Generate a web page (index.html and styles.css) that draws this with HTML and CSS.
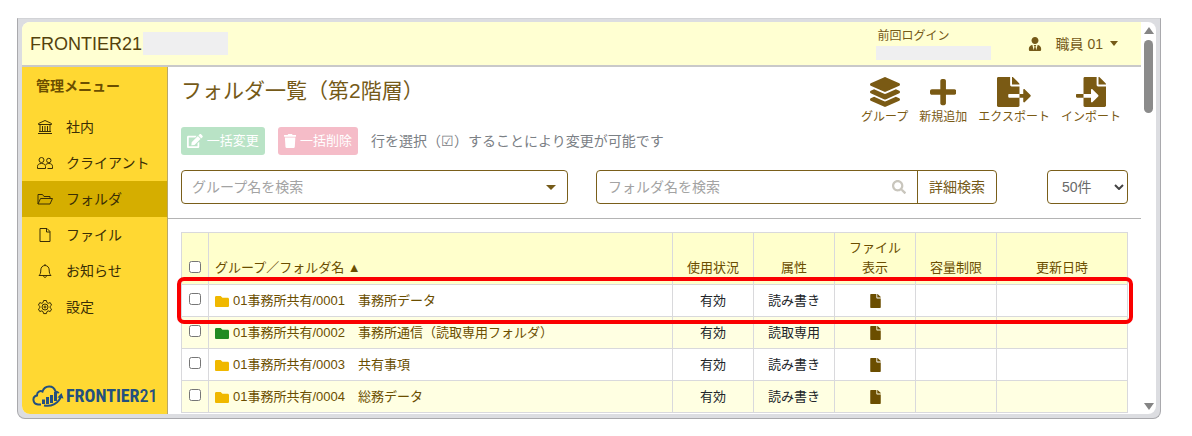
FILE: index.html
```html
<!DOCTYPE html>
<html lang="ja">
<head>
    <meta charset="UTF-8">
    <meta name="viewport" content="width=device-width, initial-scale=1.0">
    <title>FRONTIER21</title>
    <link rel="stylesheet" href="styles.css">
</head>
<body>
    <svg class="sprite" aria-hidden="true">
        <symbol id="i-folder" viewBox="0 64 512 384" preserveAspectRatio="none"><path d="M464 128H272l-64-64H48C21.49 64 0 85.49 0 112v288c0 26.51 21.49 48 48 48h416c26.51 0 48-21.49 48-48V176c0-26.51-21.49-48-48-48z"/></symbol>
        <symbol id="i-file" viewBox="0 0 384 512"><path d="M224 136V0H24C10.7 0 0 10.7 0 24v464c0 13.3 10.7 24 24 24h336c13.3 0 24-10.7 24-24V160H248c-13.2 0-24-10.8-24-24zm160-14.1v6.1H256V0h6.1c6.4 0 12.5 2.5 17 7l97.9 98c4.5 4.5 7 10.6 7 16.9z"/></symbol>
    </svg>

    <div class="window">
        <div class="app">
            <header class="topbar">
                <div class="brand">FRONTIER21 <span class="mask mask-brand"></span></div>
                <div class="account">
                    <div class="last-login">
                        <span>前回ログイン</span>
                        <span class="mask mask-login"></span>
                    </div>
                    <button type="button" class="user-menu">
                        <svg class="user-icon" viewBox="0 0 448 512"><path d="M224 256c70.7 0 128-57.3 128-128S294.7 0 224 0 96 57.3 96 128s57.3 128 128 128zm95.8 32.6L272 480l-32-136 32-56h-96l32 56-32 136-47.8-191.4C56.9 292 0 350.3 0 422.4V464c0 26.5 21.5 48 48 48h352c26.5 0 48-21.5 48-48v-41.6c0-72.1-56.9-130.4-128.2-133.8z"/></svg>
                        <span>職員 01</span>
                        <span class="caret"></span>
                    </button>
                </div>
            </header>

            <div class="body">
                <nav class="sidebar">
                    <h2>管理メニュー</h2>
                    <a href="#">
                        <svg viewBox="0 0 16 16"><path d="M1.5 4.5 8 1.5l6.500 3v1h-13zM3 5.500v7M5.500 7v5.500M8 7v5.500M10.500 7v5.500M13 5.500v7M2 12.500h12M1 14.500h14"/></svg>
                        <span>社内</span>
                    </a>
                    <a href="#">
                        <svg viewBox="0 0 16 16"><circle cx="4.500" cy="5" r="2.500"/><circle cx="11.800" cy="5.500" r="2.200"/><path d="M.500 13.500v-2c0-2 1.500-3 4-3s4 1 4 3v2zM8.500 10c.7-1 1.800-1.500 3.300-1.500 2.400 0 3.700 1 3.700 2.800v2.200h-5"/></svg>
                        <span>クライアント</span>
                    </a>
                    <a href="#" class="active">
                        <svg viewBox="0 0 16 16"><path d="M1 13V3.500h4.500l1.500 2h6V7.500M1 13l2.500-5.500h12L13 13z"/></svg>
                        <span>フォルダ</span>
                    </a>
                    <a href="#">
                        <svg viewBox="0 0 16 16"><path d="M3 1.500h7l3 3v10H3zM9.500 1.500v3.500H13"/></svg>
                        <span>ファイル</span>
                    </a>
                    <a href="#">
                        <svg viewBox="0 0 16 16"><path d="M2 12.500c1.200-1.200 1.800-2.500 1.800-5.500 0-2.500 1.700-4.500 4.200-4.500s4.200 2 4.200 4.500c0 3 .6 4.300 1.800 5.500zM8 1v1.500M6.500 12.500c0 2.500 3 2.500 3 0"/></svg>
                        <span>お知らせ</span>
                    </a>
                    <a href="#">
                        <svg viewBox="0 0 16 16"><path d="m6.600 1.500h2.800l.5 2 1.300.8 2-.7 1.400 2.500-1.500 1.300v1.400l1.500 1.300-1.400 2.400-2-.6-1.300.8-.5 1.900H6.600l-.5-1.900-1.300-.8-2 .6-1.400-2.400 1.500-1.300V7.400L1.400 6.100l1.400-2.500 2 .7 1.300-.8z"/><circle cx="8" cy="8" r="3"/><circle cx="8" cy="8" r="1"/></svg>
                        <span>設定</span>
                    </a>
                    <div class="logo">
                        <svg viewBox="0 0 32 24"><path class="logo-line" d="M9 20.500H6C.5 20-.2 12.500 5 11.500c-.2-4 3.500-5 5.500-4C12.500 1 21.500.5 23.500 7.500c1.500.2 2.500.8 3.300 1.700M12 21.500c7 1.500 15-2 17-9.500"/><path class="logo-fill" d="M10 15.500h3v4.500h-3zM14 13h3v7h-3zM18 11h3v8h-3zM22 8h3v9h-3zM25.500 13.500 29.500 9l2 5.500z"/></svg>
                        <span>FRONTIER<b>21</b></span>
                    </div>
                </nav>

                <main class="content">
                    <section class="controls">
                        <div class="heading">
                            <div>
                                <h1>フォルダ一覧（第2階層）</h1>
                                <div class="bulk">
                                    <button type="button" class="bulk-btn edit">
                                        <svg viewBox="0 0 576 512"><path d="M402.600 83.200l90.200 90.200c3.800 3.800 3.800 10 0 13.800L274.400 405.600l-92.800 10.300c-12.400 1.400-22.900-9.100-21.500-21.500l10.300-92.800L388.800 83.200c3.800-3.800 10-3.800 13.800 0zm162-22.900l-48.800-48.800c-15.200-15.200-39.900-15.200-55.200 0l-35.400 35.400c-3.800 3.800-3.800 10 0 13.800l90.200 90.200c3.800 3.800 10 3.800 13.800 0l35.400-35.400c15.200-15.300 15.200-40 0-55.200zM384 346.200V448H64V128h229.800c3.200 0 6.200-1.300 8.500-3.500l40-40c7.600-7.600 2.200-20.500-8.500-20.500H48C21.500 64 0 85.500 0 112v352c0 26.500 21.500 48 48 48h352c26.500 0 48-21.500 48-48V306.200c0-10.700-12.900-16-20.500-8.500l-40 40c-2.200 2.300-3.500 5.300-3.500 8.500z"/></svg>
                                        一括変更
                                    </button>
                                    <button type="button" class="bulk-btn delete">
                                        <svg viewBox="0 0 448 512"><path d="M432 32H312l-9.400-18.700A24 24 0 0 0 281.100 0H166.800a23.720 23.720 0 0 0-21.400 13.300L136 32H16A16 16 0 0 0 0 48v32a16 16 0 0 0 16 16h416a16 16 0 0 0 16-16V48a16 16 0 0 0-16-16zM53.200 467a48 48 0 0 0 47.900 45h245.800a48 48 0 0 0 47.900-45L416 128H32z"/></svg>
                                        一括削除
                                    </button>
                                    <span class="hint">行を選択（☑）することにより変更が可能です</span>
                                </div>
                            </div>
                            <div class="actions">
                                <button type="button">
                                    <svg viewBox="0 0 512 512"><path d="M12.410 148.020l232.940 105.670c6.800 3.090 14.490 3.090 21.290 0l232.940-105.670c16.550-7.510 16.550-32.520 0-40.030L266.650 2.310a25.607 25.607 0 0 0-21.290 0L12.410 107.980c-16.550 7.510-16.550 32.530 0 40.040zm487.180 88.280l-58.090-26.330-161.640 73.270c-7.560 3.430-15.590 5.170-23.860 5.170s-16.290-1.740-23.860-5.170L70.510 209.970l-58.100 26.330c-16.550 7.500-16.550 32.500 0 40l232.940 105.590c6.800 3.080 14.490 3.080 21.290 0L499.590 276.300c16.550-7.500 16.550-32.500 0-40zm0 127.800l-57.870-26.230-161.860 73.370c-7.560 3.430-15.590 5.170-23.860 5.170s-16.290-1.740-23.860-5.170L70.290 337.870 12.410 364.100c-16.550 7.500-16.550 32.500 0 40l232.940 105.590c6.800 3.080 14.490 3.080 21.290 0L499.590 404.100c16.550-7.500 16.550-32.500 0-40z"/></svg>
                                    <span>グループ</span>
                                </button>
                                <button type="button">
                                    <svg viewBox="0 0 448 512"><path d="M416 208H272V64c0-17.670-14.330-32-32-32h-32c-17.670 0-32 14.330-32 32v144H32c-17.670 0-32 14.330-32 32v32c0 17.670 14.330 32 32 32h144v144c0 17.670 14.330 32 32 32h32c17.670 0 32-14.330 32-32V304h144c17.670 0 32-14.330 32-32v-32c0-17.670-14.330-32-32-32z"/></svg>
                                    <span>新規追加</span>
                                </button>
                                <button type="button">
                                    <svg viewBox="0 0 576 512"><path d="M384 121.900c0-6.300-2.500-12.400-7-16.900L279.100 7c-4.500-4.500-10.600-7-17-7H256v128h128zM571 308l-95.700-96.400c-10.100-10.100-27.400-3-27.400 11.300V288h-64v64h64v65.200c0 14.300 17.300 21.400 27.400 11.300L571 332c6.600-6.600 6.600-17.400 0-24zm-379 28v-32c0-8.800 7.200-16 16-16h176V160H248c-13.200 0-24-10.800-24-24V0H24C10.700 0 0 10.700 0 24v464c0 13.300 10.700 24 24 24h336c13.300 0 24-10.700 24-24V352H208c-8.800 0-16-7.200-16-16z"/></svg>
                                    <span>エクスポート</span>
                                </button>
                                <button type="button">
                                    <svg viewBox="0 0 512 512"><path d="M16 288c-8.800 0-16 7.200-16 16v32c0 8.800 7.200 16 16 16h112v-64zm489-183L407.100 7c-4.500-4.500-10.600-7-17-7H384v128h128v-6.100c0-6.300-2.500-12.400-7-16.900zm-153 31V0H152c-13.300 0-24 10.700-24 24v264h128v-65.200c0-14.300 17.300-21.400 27.400-11.300L379 308c6.600 6.700 6.600 17.400 0 24l-95.700 96.400c-10.100 10.100-27.400 3-27.400-11.300V352H128v136c0 13.300 10.700 24 24 24h336c13.300 0 24-10.700 24-24V160H376c-13.200 0-24-10.800-24-24z"/></svg>
                                    <span>インポート</span>
                                </button>
                            </div>
                        </div>

                        <form class="search">
                            <div class="field group-field">
                                <select class="group-select" aria-label="グループ名を検索">
                                    <option>グループ名を検索</option>
                                </select>
                                <span class="caret"></span>
                            </div>
                            <div class="field folder-field">
                                <input type="text" placeholder="フォルダ名を検索" aria-label="フォルダ名を検索">
                                <svg class="search-icon" viewBox="0 0 512 512"><path d="M505 442.700L405.300 343c-4.500-4.500-10.600-7-17-7H372c27.600-35.300 44-79.700 44-128C416 93.100 322.900 0 208 0S0 93.100 0 208s93.100 208 208 208c48.300 0 92.700-16.400 128-44v16.300c0 6.400 2.500 12.500 7 17l99.700 99.700c9.400 9.400 24.600 9.400 33.900 0l28.300-28.300c9.400-9.400 9.400-24.600.1-34zM208 336c-70.700 0-128-57.200-128-128 0-70.700 57.200-128 128-128 70.700 0 128 57.200 128 128 0 70.700-57.200 128-128 128z"/></svg>
                                <button type="button" class="detail-btn">詳細検索</button>
                            </div>
                            <div class="field count-field">
                                <select aria-label="表示件数">
                                    <option>50件</option>
                                </select>
                                <svg class="chevron" viewBox="0 0 10 6"><path d="M1 1l4 4 4-4"/></svg>
                            </div>
                        </form>
                    </section>

                    <div class="list">
                        <table>
                            <colgroup>
                                <col class="col-check">
                                <col>
                                <col class="col-info">
                                <col class="col-info">
                                <col class="col-info">
                                <col class="col-info">
                                <col class="col-date">
                            </colgroup>
                            <thead>
                                <tr>
                                    <th><input type="checkbox" aria-label="すべて選択"></th>
                                    <th class="name">グループ／フォルダ名 ▲</th>
                                    <th>使用状況</th>
                                    <th>属性</th>
                                    <th>ファイル<br>表示</th>
                                    <th>容量制限</th>
                                    <th>更新日時</th>
                                </tr>
                            </thead>
                            <tbody>
                                <tr class="marked">
                                    <td><input type="checkbox" aria-label="0001を選択"><span class="marker"></span></td>
                                    <td class="name"><a href="#"><svg class="folder"><use href="#i-folder"/></svg>01事務所共有/0001　事務所データ</a></td>
                                    <td>有効</td>
                                    <td>読み書き</td>
                                    <td><svg class="file"><use href="#i-file"/></svg></td>
                                    <td></td>
                                    <td></td>
                                </tr>
                                <tr>
                                    <td><input type="checkbox" aria-label="0002を選択"></td>
                                    <td class="name"><a href="#"><svg class="folder readonly"><use href="#i-folder"/></svg>01事務所共有/0002　事務所通信（読取専用フォルダ）</a></td>
                                    <td>有効</td>
                                    <td>読取専用</td>
                                    <td><svg class="file"><use href="#i-file"/></svg></td>
                                    <td></td>
                                    <td></td>
                                </tr>
                                <tr>
                                    <td><input type="checkbox" aria-label="0003を選択"></td>
                                    <td class="name"><a href="#"><svg class="folder"><use href="#i-folder"/></svg>01事務所共有/0003　共有事項</a></td>
                                    <td>有効</td>
                                    <td>読み書き</td>
                                    <td><svg class="file"><use href="#i-file"/></svg></td>
                                    <td></td>
                                    <td></td>
                                </tr>
                                <tr>
                                    <td><input type="checkbox" aria-label="0004を選択"></td>
                                    <td class="name"><a href="#"><svg class="folder"><use href="#i-folder"/></svg>01事務所共有/0004　総務データ</a></td>
                                    <td>有効</td>
                                    <td>読み書き</td>
                                    <td><svg class="file"><use href="#i-file"/></svg></td>
                                    <td></td>
                                    <td></td>
                                </tr>
                            </tbody>
                        </table>
                    </div>
                </main>
            </div>
        </div>

        <div class="scrollbar" aria-hidden="true">
            <span class="arrow up"></span>
            <span class="thumb"></span>
            <span class="arrow down"></span>
        </div>
    </div>
</body>
</html>
```
FILE: styles.css
```css
* {
    margin: 0;
    padding: 0;
    box-sizing: border-box;
}

body {
    font-family: "Liberation Sans", "Noto Sans CJK JP", sans-serif;
    font-size: 14px;
    line-height: 20px;
    color: #755a18;
    background: #fff;
    height: 100vh;
    padding: 18px 31px 17px 17px;
}

button,
input,
select {
    font: inherit;
    color: inherit;
}

button {
    background: none;
    border: none;
    cursor: pointer;
}

a {
    color: inherit;
    text-decoration: none;
}

svg {
    fill: currentColor;
    flex-shrink: 0;
}

.sprite {
    position: absolute;
    width: 0;
    height: 0;
}

/* window frame */
.window {
    display: flex;
    height: 100%;
    border: 1px solid #a9a9ad;
    border-top-color: #d2d3d6;
    border-radius: 0 0 8px 8px;
    background: #dcdde1;
    padding: 3px 4px 4px;
}

.app {
    flex: 1;
    min-width: 0;
    display: flex;
    flex-direction: column;
    overflow: hidden;
    border-radius: 8px 0 0 8px;
    background: #fff;
}

.scrollbar {
    width: 15px;
    display: flex;
    flex-direction: column;
    align-items: center;
    padding: 5px 0 4px;
    background: #fff;
    border-radius: 0 8px 8px 0;
}

.arrow {
    border: 5px solid transparent;
}

.arrow.up {
    border-top: none;
    border-bottom: 7px solid #858585;
}

.arrow.down {
    border-bottom: none;
    border-top: 7px solid #858585;
    margin-top: auto;
}

.thumb {
    width: 9px;
    height: 73px;
    margin-top: 6px;
    border-radius: 5px;
    background: #8b8b8b;
}

/* top bar */
.topbar {
    display: flex;
    justify-content: space-between;
    height: 45px;
    flex-shrink: 0;
    padding: 0 23px 0 8px;
    background: #ffffd2;
    border-bottom: 2px solid #c9c9c9;
}

.brand {
    display: flex;
    align-items: center;
    gap: 1px;
    font-size: 18px;
    color: #54420c;
}

.mask {
    background: #efeff0;
}

.mask-brand {
    width: 85px;
    height: 23px;
}

.account {
    display: flex;
    gap: 37px;
}

.last-login {
    display: flex;
    flex-direction: column;
    font-size: 12px;
    line-height: 20px;
    padding-top: 4px;
    text-indent: 2px;
}

.mask-login {
    width: 115px;
    height: 14px;
}

.user-menu {
    display: flex;
    align-items: center;
    gap: 7px;
}

.user-icon {
    width: 14px;
    height: 14px;
    margin-right: 7px;
}

.caret {
    border: 4px solid transparent;
    border-top: 5px solid currentColor;
    border-bottom: none;
}

.body {
    flex: 1;
    min-height: 0;
    display: flex;
}

/* side menu */
.sidebar {
    width: 146px;
    flex-shrink: 0;
    display: flex;
    flex-direction: column;
    background: #ffd832;
    border-right: 1px solid #b9a868;
    color: #3a2e05;
}

.sidebar h2 {
    font-size: 14px;
    line-height: 20px;
    padding: 9px 14px 13px;
    color: #6b4e00;
}

.sidebar a {
    display: flex;
    align-items: center;
    gap: 13px;
    height: 36px;
    padding: 0 15px;
    white-space: nowrap;
}

.sidebar a.active {
    background: #d5ae00;
}

.sidebar a svg {
    width: 16px;
    height: 16px;
    fill: none;
    stroke: currentColor;
}

.logo {
    display: flex;
    align-items: center;
    gap: 2px;
    margin-top: auto;
    padding: 0 8px 6px 10px;
    font-family: "Roboto Condensed", Roboto, sans-serif;
    font-size: 18px;
    font-weight: bold;
    line-height: 24px;
    color: #23507f;
}

.logo b {
    font-weight: 500;
}

.logo svg {
    width: 32px;
    height: 24px;
}

.logo-line {
    fill: none;
    stroke: currentColor;
    stroke-width: 2;
}

/* main area */
.content {
    flex: 1;
    min-width: 0;
}

.controls {
    padding: 9px 13px 14px;
    border-bottom: 1px solid #b4b4b4;
}

.heading {
    display: flex;
    justify-content: space-between;
}

h1 {
    font-size: 21px;
    font-weight: normal;
    line-height: 30px;
}

.bulk {
    display: flex;
    align-items: center;
    gap: 13px;
    margin-top: 21px;
}

.bulk-btn {
    display: flex;
    align-items: center;
    gap: 4px;
    height: 28px;
    padding: 0 6px;
    border-radius: 3px;
    font-size: 13px;
    color: #fff;
}

.bulk-btn svg {
    height: 14px;
}

.bulk-btn.edit {
    background: #b9e3c6;
}

.bulk-btn.delete {
    background: #f5bcc8;
}

.hint {
    color: #7b8085;
}

.actions {
    display: flex;
    align-items: flex-start;
    gap: 11px;
    padding: 1px 7px 0 0;
}

.actions button {
    display: flex;
    flex-direction: column;
    align-items: center;
    font-size: 12px;
    line-height: 20px;
    color: #7a5a14;
}

.actions svg {
    height: 30px;
}

.search {
    display: flex;
    margin-top: 15px;
}

.field {
    display: flex;
    align-items: center;
    height: 34px;
    border: 1px solid #7a5f1a;
    border-radius: 4px;
    background: #fff;
}

.field select,
.field input {
    flex: 1;
    min-width: 0;
    height: 100%;
    border: none;
    outline: none;
    background: none;
    appearance: none;
}

.group-field {
    flex: 1 1 387px;
    padding: 0 11px 0 10px;
}

.group-field .caret {
    border-width: 5px 5px 0;
}

.group-field .group-select,
.field input::placeholder {
    color: #a3a3a3;
}

.folder-field {
    flex: 1 1 401px;
    margin: 0 50px 0 28px;
    padding-left: 11px;
}

.search-icon {
    width: 14px;
    height: 14px;
    margin: 0 11px;
    color: #c9c6bd;
}

.detail-btn {
    height: 100%;
    padding: 0 11px;
    border-left: 1px solid #7a5f1a;
}

.count-field {
    flex: 0 0 81px;
    padding: 0 3px 0 14px;
    color: #6a6a6a;
}

.chevron {
    width: 10px;
    height: 6px;
    fill: none;
    stroke: #444;
    stroke-width: 2;
}

/* folder table */
.list {
    padding: 13px;
}

table {
    width: 100%;
    table-layout: fixed;
    border-collapse: collapse;
    font-size: 13px;
    line-height: 20px;
}

.col-check {
    width: 27px;
}

.col-info {
    width: 81px;
}

.col-date {
    width: 131px;
}

th,
td {
    border: 1px solid #d9d9dc;
    text-align: center;
}

th {
    font-weight: normal;
    vertical-align: bottom;
    color: #6b4e00;
    background: #ffffcc;
    padding: 5px 0 6px;
}

td {
    color: #212529;
    vertical-align: middle;
    padding: 6px 0 5px;
}

th.name,
td.name {
    text-align: left;
    padding-left: 6px;
}

td.name {
    color: #6b4e00;
}

tbody tr:nth-child(even) {
    background: #ffffe2;
}

th input,
td input {
    display: block;
    width: 12px;
    height: 12px;
    margin: 0 auto 5px;
}

.folder {
    width: 14px;
    height: 11px;
    margin-right: 4px;
    vertical-align: -2px;
    color: #f0b800;
}

.folder.readonly {
    color: #228b22;
}

.file {
    width: 11px;
    height: 14px;
    display: block;
    margin: 0 auto;
    color: #6b4e00;
}

/* highlighted row */
.marked {
    position: relative;
}

.marker {
    position: absolute;
    inset: -8px -5px -7px -5px;
    border: 4px solid #fa0000;
    border-radius: 7px;
    pointer-events: none;
}
```
